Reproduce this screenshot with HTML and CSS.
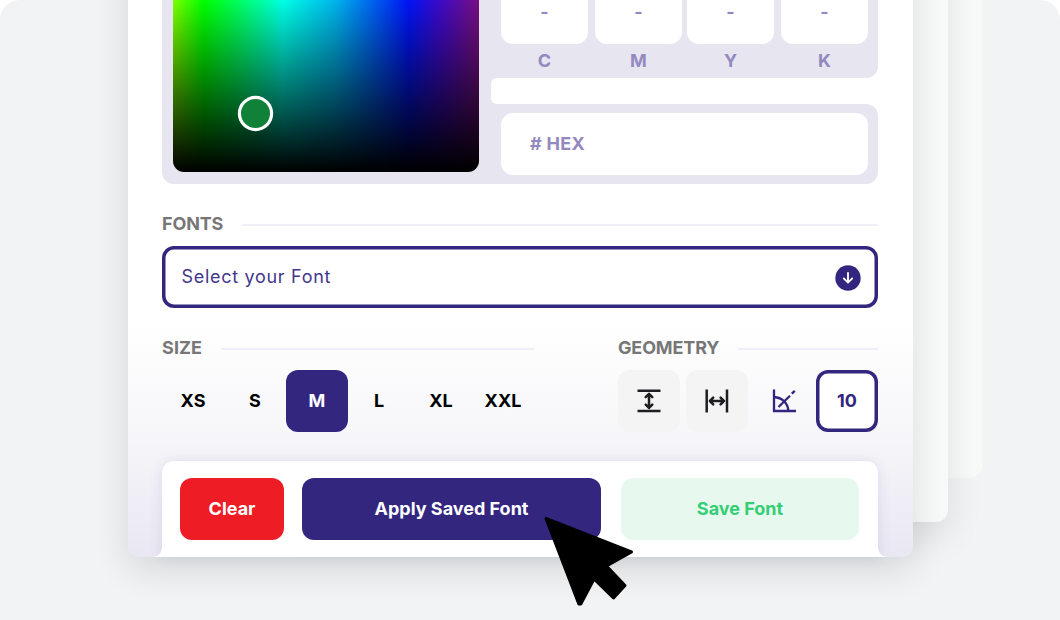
FILE: index.html
```html
<!DOCTYPE html>
<html lang="en">
<head>
<meta charset="utf-8">
<title>Font settings</title>
<link rel="stylesheet" href="styles.css">
</head>
<body>
<div class="stage">
  <div class="sheet sheet-far"></div>
  <div class="sheet sheet-near"></div>
  <main class="card">
    <section class="picker">
      <div class="spectrum"><span class="handle"></span></div>
      <div class="values">
        <div class="cmyk">
          <div class="channel"><span class="cell">-</span><span class="label">C</span></div>
          <div class="channel"><span class="cell">-</span><span class="label">M</span></div>
          <div class="channel"><span class="cell">-</span><span class="label">Y</span></div>
          <div class="channel"><span class="cell">-</span><span class="label">K</span></div>
        </div>
        <div class="divider"></div>
        <div class="hex"><div class="hex-field"><span class="hex-text"># HEX</span></div></div>
      </div>
    </section>
    <h2 class="heading heading-fonts">FONTS</h2>
    <div class="select">
      <span class="select-text">Select your Font</span>
      <svg class="select-icon" width="26" height="26" viewBox="0 0 26 26"><circle cx="13" cy="13" r="12.7" fill="#33267f"/><path d="M13 8v9.300M8.800 13.400l4.200 4.200 4.200-4.200" fill="none" stroke="#fff" stroke-width="1.9" stroke-linecap="round" stroke-linejoin="round"/></svg>
    </div>
    <div class="options">
      <section class="size">
        <h2 class="heading heading-size">SIZE</h2>
        <div class="sizes">
          <span class="tile">XS</span><span class="tile">S</span><span class="tile active">M</span><span class="tile">L</span><span class="tile">XL</span><span class="tile">XXL</span>
        </div>
      </section>
      <section class="geometry">
        <h2 class="heading">GEOMETRY</h2>
        <div class="tools">
          <span class="tile grey"><svg width="26" height="26" viewBox="0 0 26 26" fill="none" stroke="#1d1d22" stroke-width="2.500"><path d="M1.500 2.700h23M1.500 23h23"/><path d="M13 6v14M9.700 9.200L13 5.900l3.300 3.300M9.700 16.600l3.300 3.300 3.300-3.300" stroke-linecap="round" stroke-linejoin="round"/></svg></span>
          <span class="tile grey"><svg width="26" height="26" viewBox="0 0 26 26" fill="none" stroke="#1d1d22" stroke-width="2.500"><path d="M2.700 1.500v23M23 1.500v23"/><path d="M6 13h14M9.200 9.700L5.900 13l3.300 3.300M16.600 9.700l3.300 3.300-3.300 3.300" stroke-linecap="round" stroke-linejoin="round"/></svg></span>
          <span class="tile angle"><svg width="26" height="26" viewBox="0 0 26 26" fill="none" stroke="#33267f" stroke-width="2.300"><path d="M3 1.500V23H25"/><path d="M3 9c8 .5 14 6 14.300 14M7.500 19L19 7.700M20.800 5.700l3-2.800"/></svg></span>
          <span class="tile outlined">10</span>
        </div>
      </section>
    </div>
    <footer class="actions">
      <button class="btn clear">Clear</button>
      <button class="btn apply">Apply Saved Font</button>
      <button class="btn save">Save Font</button>
    </footer>
  </main>
  <svg class="cursor" width="96" height="98" viewBox="0 0 96 98"><path d="M7 8.500L92.500 42 67.500 56 86 75.500 74.500 88 55 69 41.800 94 39.800 94Z" fill="#000" stroke="#000" stroke-width="3" stroke-linejoin="round"/></svg>
</div>
</body>
</html>
```
FILE: styles.css
```css
* { box-sizing: border-box; }
body { margin: 0; background: #fff; font-family: Inter, "Liberation Sans", sans-serif; font-size: 18px; font-weight: 700; }
.stage { position: relative; isolation: isolate; width: 1060px; height: 620px; overflow: hidden; border-radius: 20px 20px 0 0; background: #f1f3f5; padding-left: 128px; }
.sheet { position: absolute; top: -60px; background: #f7faf9; }
.sheet-far { left: 400px; width: 582px; height: 538px; border-radius: 0 0 12px 12px; }
.sheet-near { left: 300px; width: 648px; height: 582px; border-radius: 0 0 12px 12px; box-shadow: 0 12px 36px rgba(0,0,0,.1); }
.card { position: relative; isolation: isolate; width: 785px; height: 557px; padding: 0 35px 0 34px; border-radius: 0 0 10px 10px; background: linear-gradient(#fff 0, #fff 320px, #f7f7fa 430px, #e9e7f2 557px); }
.card::before { content: ""; position: absolute; z-index: -1; inset: -60px 0 0; border-radius: 10px; box-shadow: 0 12px 36px rgba(0,0,0,.12); }
.picker { display: flex; width: 716px; height: 184px; padding-left: 11px; border-radius: 0 0 12px 12px; background: linear-gradient(#e7e5ef, #e7e5ef) 0 0 / 345px 100% no-repeat; }
.spectrum { width: 306px; height: 172px; border-radius: 0 0 11px 11px; background: linear-gradient(rgba(0,0,0,0), #000), linear-gradient(90deg, #7eff00 0, #00ff00 10%, #00ff65 22%, #00ffe6 36%, #00b4eb 53%, #0014f5 77%, #3c0ac8 87%, #780f82 100%); }
.handle { display: block; width: 29px; height: 29px; margin: 98.500px 0 0 67.500px; border-radius: 50%; background: #118039; box-shadow: 0 0 0 3.200px #fff; }
.values { width: 387px; margin-left: 12px; color: #9389c0; }
.cmyk { display: flex; height: 78px; padding: 0 10px; justify-content: space-between; border-radius: 0 0 12px 0; background: #e7e5ef; }
.channel { display: flex; flex-direction: column; width: 87px; text-align: center; }
.channel:nth-child(3) { margin-left: -2px; }
.cell { height: 43.500px; padding-top: 1px; border-radius: 0 0 12px 12px; background: #fff; }
.label { margin-top: 6px; line-height: 22px; }
.divider { height: 25.500px; border-radius: 6px 0 0 6px; background: #fff; }
.hex { height: 80.500px; padding: 9px 10px; border-radius: 0 12px 12px 0; background: #e7e5ef; }
.hex-field { display: flex; align-items: center; height: 62px; padding: 0 0 1px 29px; border-radius: 12px; background: #fff; letter-spacing: .3px; }
.heading { display: flex; align-items: center; gap: 19px; height: 22px; margin: 0; font-size: 18px; font-weight: 700; letter-spacing: -.15px; color: #777; }
.heading::after { content: ""; flex: 1; height: 2px; margin-top: 3px; background: #f0eff8; }
.heading-fonts { width: 716px; margin-top: 28px; }
.heading-size { letter-spacing: .1px; }
.select { display: flex; align-items: center; justify-content: space-between; width: 716px; height: 62px; margin-top: 12px; padding: 1px 17px 0 19.500px; border-radius: 12px; background: #fff; box-shadow: inset 0 0 0 3.500px #33267f; color: #43378c; font-weight: 400; }
.select-text { padding-bottom: 2px; letter-spacing: .7px; }
.options { display: flex; justify-content: space-between; width: 716px; margin-top: 28px; }
.size { width: 372px; }
.geometry { width: 260px; }
.sizes, .tools { display: flex; margin-top: 12px; }
.tools { justify-content: space-between; }
.tile { display: flex; align-items: center; justify-content: center; width: 62px; height: 62px; padding-bottom: 2px; border-radius: 12px; color: #000; }
.active { background: #33267f; color: #fff; }
.grey { padding-bottom: 0; background: #f4f4f5; }
.angle { padding-bottom: 0; margin: 0 -5px 0 -1px; }
.outlined { background: #fff; box-shadow: inset 0 0 0 3.500px #33267f; color: #33267f; }
.actions { position: relative; display: flex; width: 716px; height: 96px; margin-top: 29px; padding: 17px 18px; border-radius: 12px 12px 0 0; background: #fff; box-shadow: 0 0 14px rgba(51,38,127,.1); }
.actions::before, .actions::after { content: ""; position: absolute; bottom: 0; width: 9px; height: 9px; }
.actions::before { right: 100%; background: radial-gradient(circle at 0 0, transparent 8.500px, #fff 9px); }
.actions::after { left: 100%; background: radial-gradient(circle at 100% 0, transparent 8.500px, #fff 9px); }
.btn { height: 62px; padding: 0 0 2px; border: 0; border-radius: 12px; color: #fff; font: inherit; }
.clear { width: 104px; background: #ee1c25; }
.apply { width: 299px; margin-left: 18px; background: #33267f; }
.save { width: 238px; margin-left: 20px; background: #e7f9ef; color: #34ce75; }
.cursor { position: absolute; left: 539px; top: 510px; }
```
